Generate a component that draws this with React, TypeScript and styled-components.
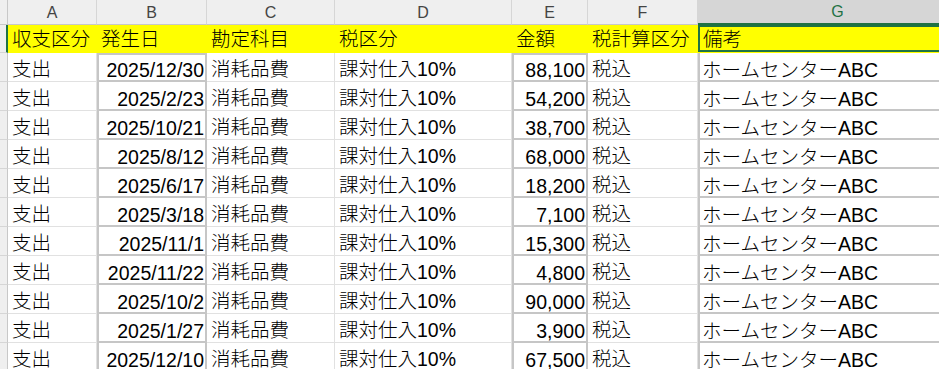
import React from "react";
import styled, { createGlobalStyle, css } from "styled-components";

const GlobalStyle = createGlobalStyle`
    body {
        margin: 0;
        background: #ffffff;
        overflow: hidden;
    }
`;

type Row = {
    date: string;
    amount: string;
};

const rows: Row[] = [
    { date: "2025/12/30", amount: "88,100" },
    { date: "2025/2/23", amount: "54,200" },
    { date: "2025/10/21", amount: "38,700" },
    { date: "2025/8/12", amount: "68,000" },
    { date: "2025/6/17", amount: "18,200" },
    { date: "2025/3/18", amount: "7,100" },
    { date: "2025/11/1", amount: "15,300" },
    { date: "2025/11/22", amount: "4,800" },
    { date: "2025/10/2", amount: "90,000" },
    { date: "2025/1/27", amount: "3,900" },
    { date: "2025/12/10", amount: "67,500" },
];

const columns = ["A", "B", "C", "D", "E", "F", "G"];
const headings = ["収支区分", "発生日", "勘定科目", "税区分", "金額", "税計算区分", "備考"];

const GREEN = "#1f7244";
const GRID = "#e1e1e1";
const BOX = "#c6c6c6";

const Sheet = styled.div`
    display: grid;
    grid-template-columns: 8px 89px 110px 128px 177px 76px 110px 280px;
    grid-template-rows: 25px 28px;
    grid-auto-rows: 29px;
    width: 939px;
    height: 369px;
    overflow: hidden;
    font-family: "Liberation Sans", "Noto Sans CJK JP", sans-serif;
    font-size: 19.5px;
    font-weight: 300;
    color: #000;
`;

const ColHead = styled.div<{ $active?: boolean }>`
    box-sizing: border-box;
    display: flex;
    align-items: center;
    justify-content: center;
    padding-top: 1px;
    font-family: "Liberation Sans", sans-serif;
    font-weight: 400;
    font-size: 16px;
    background: ${(p) => (p.$active ? "#d6d6d6" : "#efefef")};
    color: ${(p) => (p.$active ? GREEN : "#444")};
    border-right: 1px solid #d6d6d6;
    border-bottom: ${(p) => (p.$active ? `2px solid ${GREEN}` : "1px solid #c8c8c8")};
`;

const Corner = styled.div`
    box-sizing: border-box;
    background: #efefef;
    border-right: 1px solid #c8c8c8;
    border-bottom: 1px solid #c8c8c8;
`;

const RowHead = styled.div<{ $active?: boolean }>`
    box-sizing: border-box;
    background: #efefef;
    border-bottom: 1px solid #d6d6d6;
    border-right: ${(p) => (p.$active ? `2px solid ${GREEN}` : "1px solid #c8c8c8")};
`;

const Cell = styled.div<{
    $align?: "left" | "right";
    $boxed?: boolean;
    $first?: boolean;
    $header?: boolean;
    $selected?: boolean;
    $leftOnly?: boolean;
}>`
    box-sizing: border-box;
    display: flex;
    align-items: flex-end;
    justify-content: ${(p) => (p.$align === "right" ? "flex-end" : "flex-start")};
    padding: 0 ${(p) => (p.$align === "right" ? "3px" : "4px")} 2px;
    line-height: 1;
    white-space: nowrap;
    overflow: hidden;
    border-right: 1px solid ${GRID};
    border-bottom: 1px solid ${GRID};

    ${(p) =>
        p.$header &&
        css`
            background: #ffff00;
            border-right-color: #ffff00;
            border-bottom-color: #ffff00;
            padding-bottom: 3px;
        `}

    ${(p) =>
        p.$boxed &&
        css`
            border-right: none;
            border-bottom: none;
            box-shadow: inset 2px 0 ${BOX},
                ${p.$leftOnly ? "inset 0 0 transparent" : `inset -2px 0 ${BOX}`},
                inset 0 -2px ${BOX}
                ${p.$first ? `, inset 0 2px ${BOX}` : ""};
        `}

    ${(p) =>
        p.$selected &&
        css`
            box-shadow: inset 0 0 0 2px ${GREEN};
            padding-left: 5px;
        `}
`;

const App = () => {
    return (
        <>
            <GlobalStyle />
            <Sheet>
                <Corner />
                {columns.map((c) => (
                    <ColHead key={c} $active={c === "G"}>
                        {c}
                    </ColHead>
                ))}

                <RowHead $active />
                {headings.map((h, i) => (
                    <Cell key={h} $header $selected={i === 6}>
                        {h}
                    </Cell>
                ))}

                {rows.map((r, i) => (
                    <React.Fragment key={i}>
                        <RowHead />
                        <Cell>支出</Cell>
                        <Cell $align="right" $boxed $first={i === 0}>
                            {r.date}
                        </Cell>
                        <Cell>消耗品費</Cell>
                        <Cell>課対仕入10%</Cell>
                        <Cell $align="right" $boxed $first={i === 0}>
                            {r.amount}
                        </Cell>
                        <Cell>税込</Cell>
                        <Cell $boxed $leftOnly>
                            ホームセンターABC
                        </Cell>
                    </React.Fragment>
                ))}
            </Sheet>
        </>
    );
};

export default App;
